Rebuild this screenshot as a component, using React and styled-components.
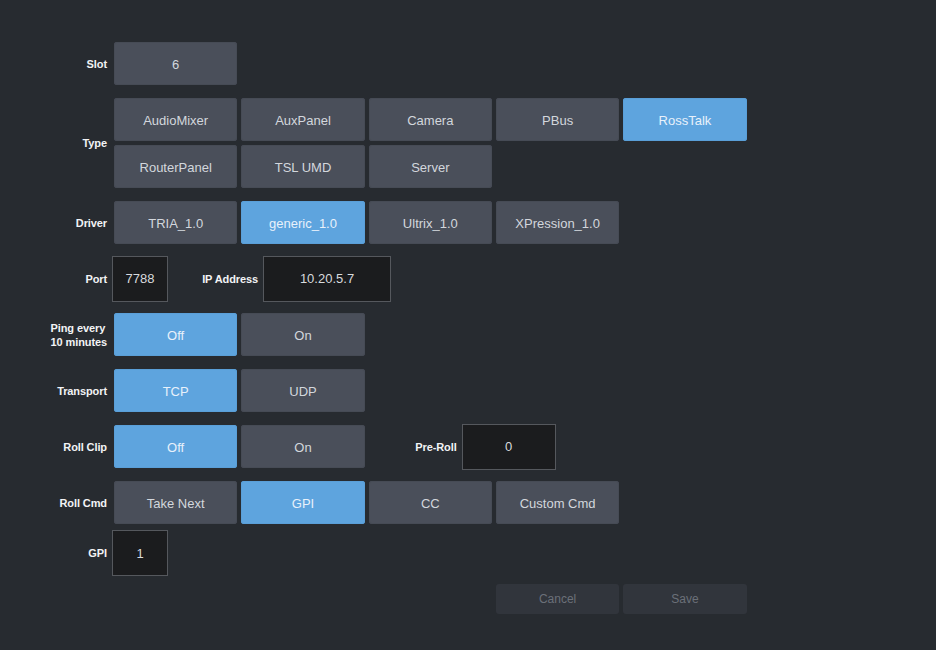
import React from "react";
import styled, { createGlobalStyle } from "styled-components";

const Global = createGlobalStyle`
  html, body { margin: 0; padding: 0; background: #272b30; }
  body { font-family: "Liberation Sans", Arial, sans-serif; }
  #root { min-height: 650px; }
`;

const Page = styled.div`
  width: 936px;
  height: 650px;
  box-sizing: border-box;
  padding-top: 42px;
  background: #272b30;
  display: flex;
  flex-direction: column;
`;

const Row = styled.div`
  display: flex;
  align-items: center;
  gap: 5px;
  height: ${(p) => p.$h || 43}px;
  margin-bottom: ${(p) => (p.$mb === undefined ? 13 : p.$mb)}px;
`;

const Label = styled.div`
  width: 107px;
  flex: 0 0 107px;
  display: flex;
  justify-content: flex-end;
  color: #f2f3f5;
  font-size: 11px;
  font-weight: bold;
  line-height: 14px;
  letter-spacing: -0.1px;
`;

const LabelText = styled.span`
  text-align: left;
`;

const InlineLabel = styled.div`
  width: ${(p) => p.$w}px;
  flex: 0 0 ${(p) => p.$w}px;
  text-align: right;
  color: #f2f3f5;
  font-size: 11px;
  font-weight: bold;
  letter-spacing: -0.1px;
`;

const Group = styled.div`
  display: flex;
  flex-wrap: wrap;
  gap: 4px;
  padding: 0 2px;
  width: ${(p) => (p.$auto ? "auto" : "633px")};
  align-content: space-between;
  height: 100%;
`;

const Button = styled.div`
  flex: 0 0 123.33px;
  height: 43px;
  box-sizing: border-box;
  border-radius: 3px;
  display: flex;
  align-items: center;
  justify-content: center;
  font-size: 13px;
  padding-top: 1px;
  color: ${(p) => (p.$active ? "#e8f1fb" : "#d3d7dd")};
  background: ${(p) => (p.$active ? "#5ea4de" : "#4a4f5a")};
  box-shadow: inset 0 0 0 1px ${(p) => (p.$active ? "#5a9fd8" : "#464b55")};
`;

const Input = styled.div`
  width: ${(p) => p.$w}px;
  height: 46px;
  flex: 0 0 ${(p) => p.$w}px;
  box-sizing: border-box;
  border: 1px solid #55585d;
  background: #1b1c1e;
  display: flex;
  align-items: center;
  justify-content: center;
  color: #d8dadd;
  font-size: 13px;
`;

const Footer = styled.div`
  display: flex;
  justify-content: flex-end;
  gap: 4px;
  width: 746.6px;
`;

const FooterButton = styled.div`
  width: 123.33px;
  height: 30px;
  border-radius: 3px;
  background: #31353c;
  color: #6b7079;
  font-size: 12px;
  display: flex;
  align-items: center;
  justify-content: center;
`;

function Buttons({ items, active, auto }) {
  return (
    <Group $auto={auto}>
      {items.map((it) => (
        <Button key={it} $active={it === active}>
          {it}
        </Button>
      ))}
    </Group>
  );
}

export default function App() {
  return (
    <>
      <Global />
      <Page>
        <Row>
          <Label>Slot</Label>
          <Buttons items={["6"]} />
        </Row>
        <Row $h={90}>
          <Label>Type</Label>
          <Buttons
            items={["AudioMixer", "AuxPanel", "Camera", "PBus", "RossTalk", "RouterPanel", "TSL UMD", "Server"]}
            active="RossTalk"
          />
        </Row>
        <Row>
          <Label>Driver</Label>
          <Buttons items={["TRIA_1.0", "generic_1.0", "Ultrix_1.0", "XPression_1.0"]} active="generic_1.0" />
        </Row>
        <Row>
          <Label>Port</Label>
          <Input $w={56}>7788</Input>
          <InlineLabel $w={85}>IP Address</InlineLabel>
          <Input $w={128}>10.20.5.7</Input>
        </Row>
        <Row>
          <Label>
            <LabelText>
              Ping every
              <br />
              10 minutes
            </LabelText>
          </Label>
          <Buttons items={["Off", "On"]} active="Off" />
        </Row>
        <Row>
          <Label>Transport</Label>
          <Buttons items={["TCP", "UDP"]} active="TCP" />
        </Row>
        <Row>
          <Label>Roll Clip</Label>
          <Buttons items={["Off", "On"]} active="Off" auto />
          <InlineLabel $w={85}>Pre-Roll</InlineLabel>
          <Input $w={94}>0</Input>
        </Row>
        <Row $mb={6}>
          <Label>Roll Cmd</Label>
          <Buttons items={["Take Next", "GPI", "CC", "Custom Cmd"]} active="GPI" />
        </Row>
        <Row $h={46} $mb={8}>
          <Label>GPI</Label>
          <Input $w={56}>1</Input>
        </Row>
        <Footer>
          <FooterButton>Cancel</FooterButton>
          <FooterButton>Save</FooterButton>
        </Footer>
      </Page>
    </>
  );
}
